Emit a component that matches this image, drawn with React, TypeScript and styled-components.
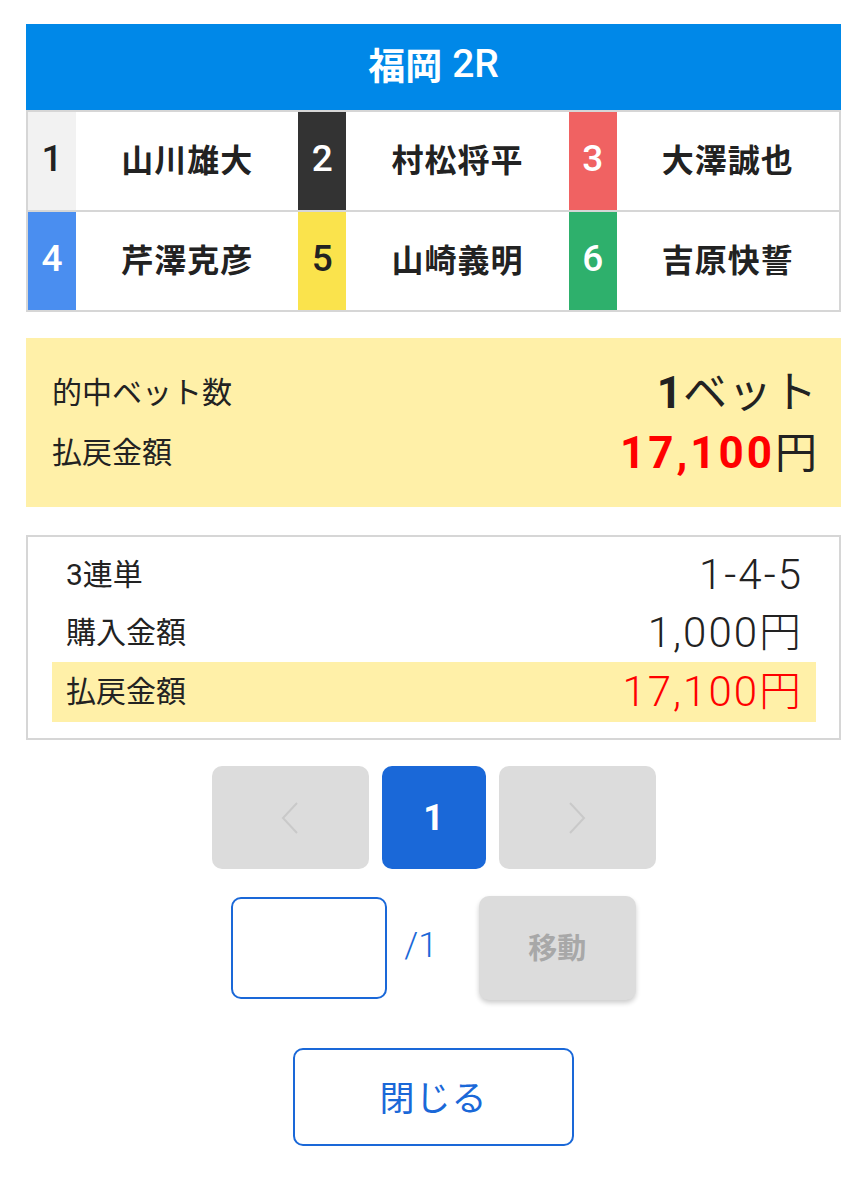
import React from 'react';
import styled, { createGlobalStyle } from 'styled-components';

const GlobalStyle = createGlobalStyle`
  body {
    margin: 0;
    background: #ffffff;
    font-family: Roboto, "Noto Sans CJK JP", sans-serif;
    color: #222222;
  }
`;

const Page = styled.div`
  width: 815px;
  padding: 24px 0 40px 26px;
`;

const Header = styled.div`
  height: 86px;
  box-sizing: border-box;
  padding-bottom: 6px;
  background: #0088e8;
  color: #ffffff;
  font-size: 37px;
  font-weight: 700;
  display: flex;
  align-items: center;
  justify-content: center;
  gap: 10px;
`;

const RaceNo = styled.span`
  font-weight: 500;
  font-size: 39px;
`;

const EntryTable = styled.div`
  border: 2px solid #d6d6d6;
`;

const EntryRow = styled.div<{ $last?: boolean }>`
  display: grid;
  grid-template-columns: repeat(3, 1fr);
  height: 98px;
  border-bottom: ${({ $last }) => ($last ? 'none' : '2px solid #d6d6d6')};
`;

const Entry = styled.div`
  display: flex;
`;

const Waku = styled.div<{ $bg: string; $fg: string }>`
  width: 48px;
  flex: none;
  box-sizing: border-box;
  padding-bottom: 6px;
  background: ${({ $bg }) => $bg};
  color: ${({ $fg }) => $fg};
  font-size: 37px;
  font-weight: 500;
  display: flex;
  align-items: center;
  justify-content: center;
`;

const RacerName = styled.div`
  flex: 1;
  box-sizing: border-box;
  padding-bottom: 6px;
  display: flex;
  align-items: center;
  justify-content: center;
  font-size: 32px;
  letter-spacing: 1px;
  font-weight: 700;
  color: #222222;
`;

const Summary = styled.div`
  margin-top: 26px;
  background: #fff0a8;
  padding: 25px 24px 24px 26px;
`;

const Line = styled.div<{ $h?: number }>`
  display: flex;
  align-items: center;
  justify-content: space-between;
  height: ${({ $h }) => $h || 60}px;
`;

const Label = styled.span`
  font-size: 30px;
  line-height: 1;
  color: #222222;
`;

const BigValue = styled.span<{ $red?: boolean; $bold?: boolean }>`
  font-size: 44px;
  line-height: 1;
  letter-spacing: ${({ $bold }) => ($bold ? '3px' : '1px')};
  margin-right: ${({ $bold }) => ($bold ? '-3px' : '-1px')};
  font-weight: ${({ $bold }) => ($bold ? 700 : 400)};
  color: ${({ $red }) => ($red ? '#ff0000' : '#222222')};
`;

const Strong = styled.span`
  font-weight: 700;
`;

const Yen = styled.span`
  font-weight: 400;
  font-size: 42px;
  color: #222222;
`;

const Detail = styled.div`
  margin-top: 28px;
  border: 2px solid #d6d6d6;
  padding: 9px 23px 16px 24px;
`;

const DetailLine = styled(Line)<{ $mark?: boolean }>`
  padding: 0 15px 0 14px;
  background: ${({ $mark }) => ($mark ? '#fff0a8' : 'transparent')};
`;

const LightValue = styled.span<{ $red?: boolean }>`
  font-size: 42px;
  line-height: 1;
  font-weight: 300;
  letter-spacing: 2px;
  margin-right: -2px;
  color: ${({ $red }) => ($red ? '#ff0000' : '#222222')};
`;

const Pager = styled.div`
  margin-top: 26px;
  display: flex;
  justify-content: center;
  gap: 13px;
`;

const PageButton = styled.div<{ $active?: boolean; $w: number }>`
  width: ${({ $w }) => $w}px;
  height: 103px;
  border-radius: 10px;
  background: ${({ $active }) => ($active ? '#1a68d8' : '#dcdcdc')};
  color: #ffffff;
  font-size: 36px;
  font-weight: 700;
  display: flex;
  align-items: center;
  justify-content: center;
`;

const JumpRow = styled.div`
  margin-top: 27px;
  display: flex;
  justify-content: center;
  align-items: center;
`;

const PageInput = styled.div`
  width: 156px;
  height: 102px;
  box-sizing: border-box;
  border: 2px solid #1a68d8;
  border-radius: 10px;
  background: #ffffff;
`;

const Total = styled.span`
  margin: 0 41px 6px 17px;
  font-size: 35px;
  color: #1a68d8;
  font-weight: 300;
`;

const MoveButton = styled.div`
  width: 157px;
  height: 104px;
  box-sizing: border-box;
  padding-bottom: 4px;
  border-radius: 10px;
  background: #dcdcdc;
  box-shadow: 0 3px 5px rgba(0, 0, 0, 0.2);
  color: #a8a8a8;
  font-size: 29px;
  font-weight: 700;
  display: flex;
  align-items: center;
  justify-content: center;
`;

const CloseRow = styled.div`
  margin-top: 48px;
  display: flex;
  justify-content: center;
`;

const CloseButton = styled.div`
  width: 281px;
  height: 98px;
  box-sizing: border-box;
  padding-bottom: 4px;
  border: 2px solid #1a68d8;
  border-radius: 10px;
  color: #1a68d8;
  font-size: 35px;
  letter-spacing: 1px;
  display: flex;
  align-items: center;
  justify-content: center;
`;

const Chevron = ({ dir }: { dir: 'left' | 'right' }) => (
  <svg width="20" height="34" viewBox="0 0 20 34" fill="none">
    <path
      d={dir === 'left' ? 'M17 2 L3 17 L17 32' : 'M3 2 L17 17 L3 32'}
      stroke="#c9c9c9"
      strokeWidth="2"
    />
  </svg>
);

const entries = [
  [
    { n: 1, name: '山川雄大', bg: '#f2f2f2', fg: '#222222' },
    { n: 2, name: '村松将平', bg: '#333333', fg: '#ffffff' },
    { n: 3, name: '大澤誠也', bg: '#f06262', fg: '#ffffff' },
  ],
  [
    { n: 4, name: '芹澤克彦', bg: '#4a8ef0', fg: '#ffffff' },
    { n: 5, name: '山崎義明', bg: '#fae34c', fg: '#222222' },
    { n: 6, name: '吉原快誓', bg: '#2eb06c', fg: '#ffffff' },
  ],
];

const App: React.FC = () => (
  <>
    <GlobalStyle />
    <Page>
      <Header>
        福岡<RaceNo>2R</RaceNo>
      </Header>
      <EntryTable>
        {entries.map((row, i) => (
          <EntryRow key={i} $last={i === entries.length - 1}>
            {row.map((e) => (
              <Entry key={e.n}>
                <Waku $bg={e.bg} $fg={e.fg}>
                  {e.n}
                </Waku>
                <RacerName>{e.name}</RacerName>
              </Entry>
            ))}
          </EntryRow>
        ))}
      </EntryTable>

      <Summary>
        <Line>
          <Label>的中ベット数</Label>
          <BigValue>
            <Strong>1</Strong>ベット
          </BigValue>
        </Line>
        <Line>
          <Label>払戻金額</Label>
          <BigValue $red $bold>
            17,100<Yen>円</Yen>
          </BigValue>
        </Line>
      </Summary>

      <Detail>
        <DetailLine $h={58}>
          <Label>3連単</Label>
          <LightValue>1-4-5</LightValue>
        </DetailLine>
        <DetailLine $h={58}>
          <Label>購入金額</Label>
          <LightValue>1,000円</LightValue>
        </DetailLine>
        <DetailLine $h={60} $mark>
          <Label>払戻金額</Label>
          <LightValue $red>17,100円</LightValue>
        </DetailLine>
      </Detail>

      <Pager>
        <PageButton $w={157}>
          <Chevron dir="left" />
        </PageButton>
        <PageButton $w={104} $active>
          1
        </PageButton>
        <PageButton $w={157}>
          <Chevron dir="right" />
        </PageButton>
      </Pager>

      <JumpRow>
        <PageInput />
        <Total>/1</Total>
        <MoveButton>移動</MoveButton>
      </JumpRow>

      <CloseRow>
        <CloseButton>閉じる</CloseButton>
      </CloseRow>
    </Page>
  </>
);

export default App;
